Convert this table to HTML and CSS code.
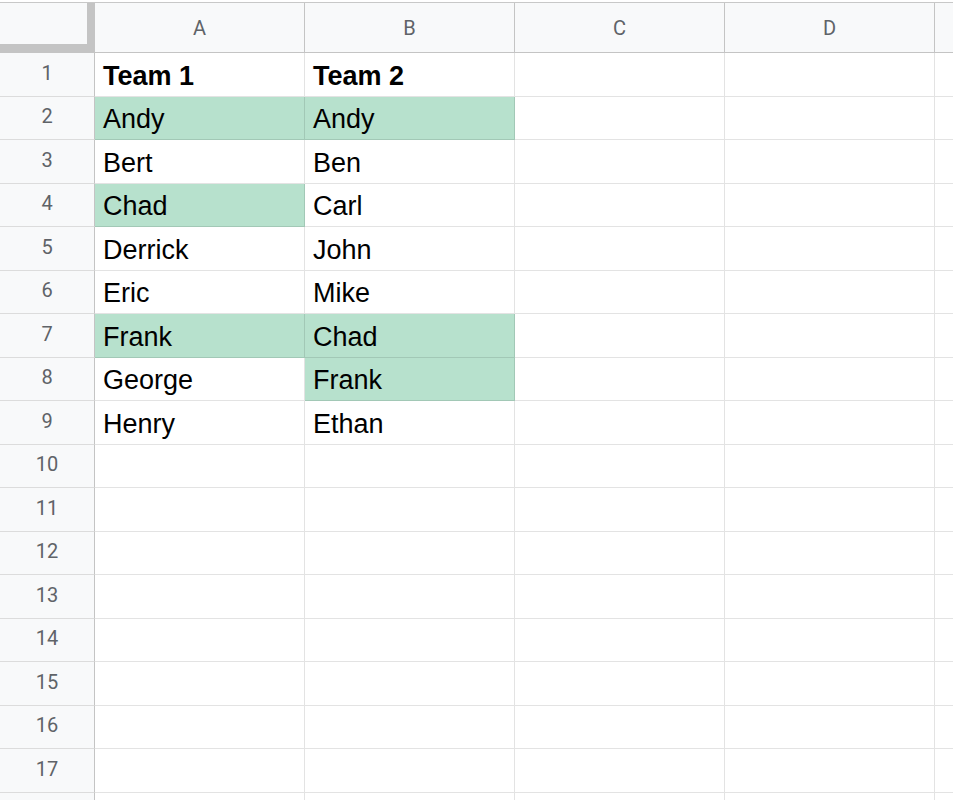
FILE: index.html
```html
<!DOCTYPE html>
<html>
<head>
<meta charset="utf-8">
<link rel="stylesheet" href="styles.css">
</head>
<body>
<div class="sheet">
  <div class="grid">
    <div class="corner"></div>
    <div class="colhead">A</div>
    <div class="colhead">B</div>
    <div class="colhead">C</div>
    <div class="colhead">D</div>
    <div class="colhead"></div>

    <div class="rowhead">1</div>
    <div class="cell bold">Team 1</div>
    <div class="cell bold">Team 2</div>
    <div class="cell"></div><div class="cell"></div><div class="cell"></div>

    <div class="rowhead">2</div>
    <div class="cell hl">Andy</div>
    <div class="cell hl">Andy</div>
    <div class="cell"></div><div class="cell"></div><div class="cell"></div>

    <div class="rowhead">3</div>
    <div class="cell">Bert</div>
    <div class="cell">Ben</div>
    <div class="cell"></div><div class="cell"></div><div class="cell"></div>

    <div class="rowhead">4</div>
    <div class="cell hl">Chad</div>
    <div class="cell">Carl</div>
    <div class="cell"></div><div class="cell"></div><div class="cell"></div>

    <div class="rowhead">5</div>
    <div class="cell">Derrick</div>
    <div class="cell">John</div>
    <div class="cell"></div><div class="cell"></div><div class="cell"></div>

    <div class="rowhead">6</div>
    <div class="cell">Eric</div>
    <div class="cell">Mike</div>
    <div class="cell"></div><div class="cell"></div><div class="cell"></div>

    <div class="rowhead">7</div>
    <div class="cell hl">Frank</div>
    <div class="cell hl">Chad</div>
    <div class="cell"></div><div class="cell"></div><div class="cell"></div>

    <div class="rowhead">8</div>
    <div class="cell">George</div>
    <div class="cell hl">Frank</div>
    <div class="cell"></div><div class="cell"></div><div class="cell"></div>

    <div class="rowhead">9</div>
    <div class="cell">Henry</div>
    <div class="cell">Ethan</div>
    <div class="cell"></div><div class="cell"></div><div class="cell"></div>

    <div class="rowhead">10</div>
    <div class="cell"></div><div class="cell"></div><div class="cell"></div><div class="cell"></div><div class="cell"></div>
    <div class="rowhead">11</div>
    <div class="cell"></div><div class="cell"></div><div class="cell"></div><div class="cell"></div><div class="cell"></div>
    <div class="rowhead">12</div>
    <div class="cell"></div><div class="cell"></div><div class="cell"></div><div class="cell"></div><div class="cell"></div>
    <div class="rowhead">13</div>
    <div class="cell"></div><div class="cell"></div><div class="cell"></div><div class="cell"></div><div class="cell"></div>
    <div class="rowhead">14</div>
    <div class="cell"></div><div class="cell"></div><div class="cell"></div><div class="cell"></div><div class="cell"></div>
    <div class="rowhead">15</div>
    <div class="cell"></div><div class="cell"></div><div class="cell"></div><div class="cell"></div><div class="cell"></div>
    <div class="rowhead">16</div>
    <div class="cell"></div><div class="cell"></div><div class="cell"></div><div class="cell"></div><div class="cell"></div>
    <div class="rowhead">17</div>
    <div class="cell"></div><div class="cell"></div><div class="cell"></div><div class="cell"></div><div class="cell"></div>
    <div class="rowhead"></div>
    <div class="cell"></div><div class="cell"></div><div class="cell"></div><div class="cell"></div><div class="cell"></div>
  </div>
</div>
</body>
</html>
```

FILE: styles.css
```css
html, body {
  margin: 0;
  padding: 0;
  background: #ffffff;
  overflow: hidden;
}

.sheet {
  width: 953px;
  height: 800px;
  overflow: hidden;
  padding-top: 2px;
  box-sizing: border-box;
}

.grid {
  display: grid;
  grid-template-columns: 95px repeat(5, 210px);
  grid-template-rows: 50px;
  grid-auto-rows: 43.5px;
  border-top: 1px solid #c8c8c8;
  width: max-content;
}

.corner {
  background: #f8f9fa;
  border-right: 8px solid #c4c4c4;
  border-bottom: 9px solid #c4c4c4;
  box-sizing: border-box;
}

.colhead {
  background: #f8f9fa;
  border-right: 1px solid #c4c4c4;
  border-bottom: 1px solid #c4c4c4;
  box-sizing: border-box;
  display: flex;
  align-items: center;
  justify-content: center;
  font-family: Roboto, "Liberation Sans", sans-serif;
  font-size: 20px;
  color: #5f6368;
}

.rowhead {
  background: #f8f9fa;
  border-right: 1px solid #c4c4c4;
  border-bottom: 1px solid #dcdcdc;
  box-sizing: border-box;
  display: flex;
  align-items: center;
  justify-content: center;
  padding-bottom: 3px;
  font-family: Roboto, "Liberation Sans", sans-serif;
  font-size: 20px;
  color: #5f6368;
}

.cell {
  border-right: 1px solid rgba(0, 0, 0, 0.11);
  border-bottom: 1px solid rgba(0, 0, 0, 0.11);
  box-sizing: border-box;
  display: flex;
  align-items: flex-end;
  padding: 0 8px 4px 8px;
  font-family: "Liberation Sans", Arial, sans-serif;
  font-size: 27px;
  color: #000000;
  white-space: nowrap;
  overflow: hidden;
}

.cell.bold {
  font-weight: bold;
}

.cell.hl {
  background: #b7e1cd;
}
```
